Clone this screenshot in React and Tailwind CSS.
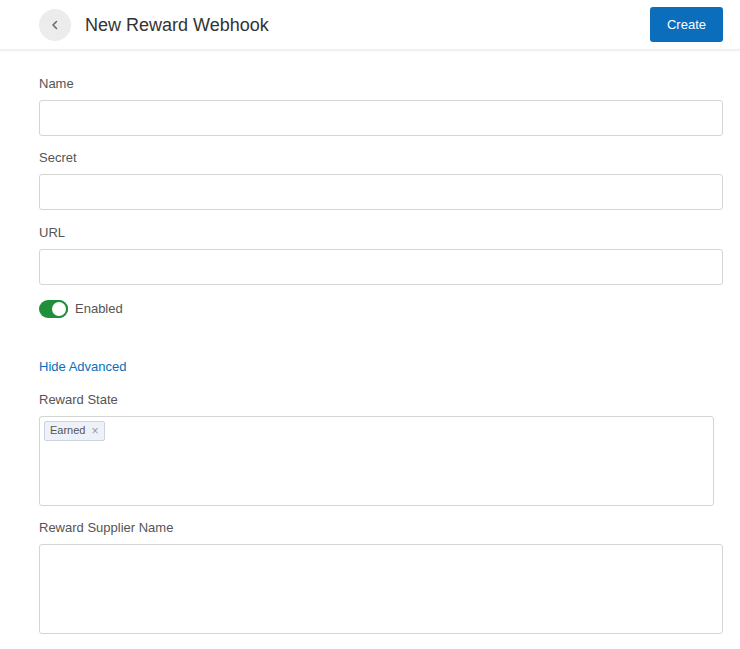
import React, { useState } from 'react';

const font = { fontFamily: '"Liberation Sans", Arial, sans-serif' };

function Field({ label, children }) {
  return (
    <div className="flex flex-col">
      <label className="text-[13px] leading-[16px] text-[#555] mb-[8px]">{label}</label>
      {children}
    </div>
  );
}

export default function NewRewardWebhook() {
  const [enabled, setEnabled] = useState(true);
  const [states, setStates] = useState(['Earned']);

  return (
    <div className="min-h-screen bg-white" style={font}>
      <header className="h-[50px] flex items-center justify-between pl-[39px] pr-[17px] bg-white shadow-[0_1px_2px_rgba(0,0,0,0.08)] border-b border-[#eeeeee]">
        <div className="flex items-center gap-[14px]">
          <button className="w-[32px] h-[32px] rounded-full bg-[#ececec] flex items-center justify-center text-[#666]">
            <svg width="10" height="10" viewBox="0 0 10 10" fill="none">
              <path d="M6.5 1.5 L3 5 L6.5 8.5" stroke="currentColor" strokeWidth="1.5" strokeLinecap="round" strokeLinejoin="round" />
            </svg>
          </button>
          <h1 className="text-[18px] leading-[24px] text-[#333] font-normal mt-[1px]">New Reward Webhook</h1>
        </div>
        <button className="h-[35px] px-[17px] rounded-[3px] bg-[#0a6ebd] text-white text-[13px]">Create</button>
      </header>

      <form className="px-[39px] pt-[26px] pr-[17px] flex flex-col">
        <div className="flex flex-col gap-[14px]">
          <Field label="Name">
            <input className="h-[36px] border border-[#d5d5d5] rounded-[3px] px-3 text-sm outline-none" />
          </Field>
          <Field label="Secret">
            <input className="h-[36px] border border-[#d5d5d5] rounded-[3px] px-3 text-sm outline-none" />
          </Field>
          <div className="mt-[1px]">
            <Field label="URL">
              <input className="h-[36px] border border-[#d5d5d5] rounded-[3px] px-3 text-sm outline-none" />
            </Field>
          </div>
        </div>

        <div className="flex items-center gap-[7px] mt-[14px]">
          <button
            type="button"
            onClick={() => setEnabled(!enabled)}
            className={`w-[29px] h-[18px] rounded-full flex items-center ${enabled ? 'bg-[#1f8f3a] justify-end' : 'bg-[#ccc] justify-start'}`}
          >
            <span className="w-[18px] h-[18px] rounded-full bg-white border-2 border-[#1f8f3a]" />
          </button>
          <span className="text-[13px] text-[#555]">Enabled</span>
        </div>

        <a className="text-[13px] text-[#0a6ebd] mt-[40px] leading-[16px] cursor-pointer">Hide Advanced</a>

        <div className="mt-[17px] flex flex-col gap-[14px]">
          <div className="flex flex-col pr-[9px]">
            <label className="text-[13px] leading-[16px] text-[#555] mb-[8px]">Reward State</label>
            <div className="h-[90px] border border-[#d5d5d5] rounded-[3px] p-[4px] flex items-start gap-1">
              {states.map(s => (
                <span key={s} className="h-[20px] flex items-center gap-[6px] px-[5px] bg-[#eef2f8] border border-[#c9d3e2] rounded-[2px] text-[11px] text-[#555]">
                  {s}
                  <span className="text-[#8b9cb6] text-[12px] leading-none cursor-pointer" onClick={() => setStates(states.filter(x => x !== s))}>×</span>
                </span>
              ))}
            </div>
          </div>
          <Field label="Reward Supplier Name">
            <div className="h-[90px] border border-[#d5d5d5] rounded-[3px]" />
          </Field>
        </div>
      </form>
    </div>
  );
}
